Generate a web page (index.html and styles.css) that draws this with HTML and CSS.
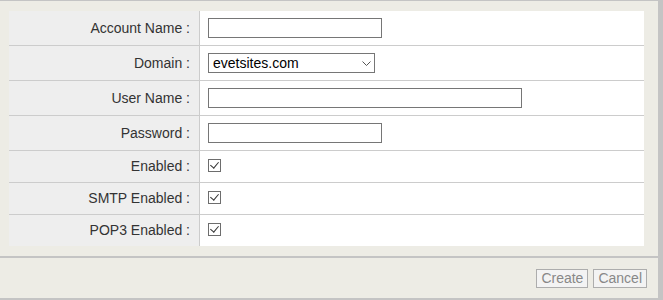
FILE: index.html
```html
<!DOCTYPE html>
<html lang="en">
<head>
    <meta charset="UTF-8">
    <meta name="viewport" content="width=device-width, initial-scale=1.0">
    <title>New Account</title>
    <link rel="stylesheet" href="styles.css">
</head>
<body>
    <div class="page">
        <div class="form-panel">
            <div class="form-table">
                <div class="form-row">
                    <label class="form-label" for="account-name">Account Name :</label>
                    <div class="form-value"><input type="text" id="account-name" class="field field-short"></div>
                </div>
                <div class="form-row">
                    <label class="form-label" for="domain">Domain :</label>
                    <div class="form-value">
                        <span class="select-wrap">
                            <select id="domain" class="field field-select">
                                <option>evetsites.com</option>
                            </select>
                            <svg class="chevron" width="9" height="5" viewBox="0 0 9 5"><path d="M0.5 0.5 L4.5 4.5 L8.5 0.5" fill="none" stroke="#555" stroke-width="1"/></svg>
                        </span>
                    </div>
                </div>
                <div class="form-row">
                    <label class="form-label" for="user-name">User Name :</label>
                    <div class="form-value"><input type="text" id="user-name" class="field field-long"></div>
                </div>
                <div class="form-row">
                    <label class="form-label" for="password">Password :</label>
                    <div class="form-value"><input type="password" id="password" class="field field-short"></div>
                </div>
                <div class="form-row check-row">
                    <label class="form-label" for="enabled">Enabled :</label>
                    <div class="form-value"><input type="checkbox" id="enabled" class="check" checked></div>
                </div>
                <div class="form-row check-row">
                    <label class="form-label" for="smtp-enabled">SMTP Enabled :</label>
                    <div class="form-value"><input type="checkbox" id="smtp-enabled" class="check" checked></div>
                </div>
                <div class="form-row check-row">
                    <label class="form-label" for="pop3-enabled">POP3 Enabled :</label>
                    <div class="form-value"><input type="checkbox" id="pop3-enabled" class="check" checked></div>
                </div>
            </div>
        </div>
        <div class="footer">
            <button class="btn">Create</button>
            <button class="btn">Cancel</button>
        </div>
    </div>
</body>
</html>
```

FILE: styles.css
```css
body {
    margin: 0;
    font-family: "Liberation Sans", Arial, sans-serif;
    font-size: 14px;
    background-color: #edece5;
}
.page {
    height: 300px;
    box-sizing: border-box;
    border-top: 1px solid #c4c4c4;
    border-right: 5px solid #c4c4c4;
    border-bottom: 2px solid #c4c4c4;
    background-color: #edece5;
}
.form-panel {
    padding: 10px 14px 10px 9px;
}
.form-table {
    background-color: #ffffff;
}
.form-row {
    display: grid;
    grid-template-columns: 191px 1fr;
    height: 35px;
    box-sizing: border-box;
    border-bottom: 1px solid #cccccc;
}
.form-row.check-row {
    height: 32px;
}
.form-row:last-child {
    border-bottom: none;
    height: 31px;
}
.form-label {
    display: flex;
    align-items: center;
    justify-content: flex-end;
    padding-right: 9px;
    padding-bottom: 1px;
    background-color: #eeeeee;
    border-right: 1px solid #cccccc;
    color: #333333;
}
.form-value {
    display: flex;
    align-items: center;
    padding-left: 8px;
}
.field {
    height: 20px;
    box-sizing: border-box;
    border: 1px solid #767676;
    border-radius: 0;
    padding: 1px 3px;
    font-family: "Liberation Sans", Arial, sans-serif;
    font-size: 14px;
    color: #000000;
    background-color: #ffffff;
    margin: 0;
}
.field-short {
    width: 174px;
}
.field-long {
    width: 314px;
}
.select-wrap {
    position: relative;
    display: inline-block;
    height: 20px;
}
.field-select {
    appearance: none;
    -webkit-appearance: none;
    width: 167px;
    padding: 0 0 0 4px;
    line-height: 18px;
}
.chevron {
    position: absolute;
    left: 154px;
    top: 8px;
    pointer-events: none;
}
.check {
    appearance: none;
    -webkit-appearance: none;
    width: 13px;
    height: 13px;
    margin: 0 0 3px 0;
    border: 1px solid #6d6d6d;
    background-color: #ffffff;
    position: relative;
}
.check:checked::after {
    content: "";
    position: absolute;
    left: 3px;
    top: 0px;
    width: 4px;
    height: 7px;
    border-right: 1px solid #333333;
    border-bottom: 1px solid #333333;
    transform: rotate(40deg);
}
.footer {
    border-top: 2px solid #c4c4c4;
    height: 40px;
    display: flex;
    justify-content: flex-end;
    align-items: center;
    gap: 5px;
    padding-right: 11px;
}
.btn {
    height: 19px;
    padding: 0 4px;
    font-family: "Liberation Sans", Arial, sans-serif;
    font-size: 14px;
    line-height: 17px;
    color: #888888;
    background-color: #f3f3f3;
    border: 1px solid #adadad;
    border-radius: 0;
}
```
